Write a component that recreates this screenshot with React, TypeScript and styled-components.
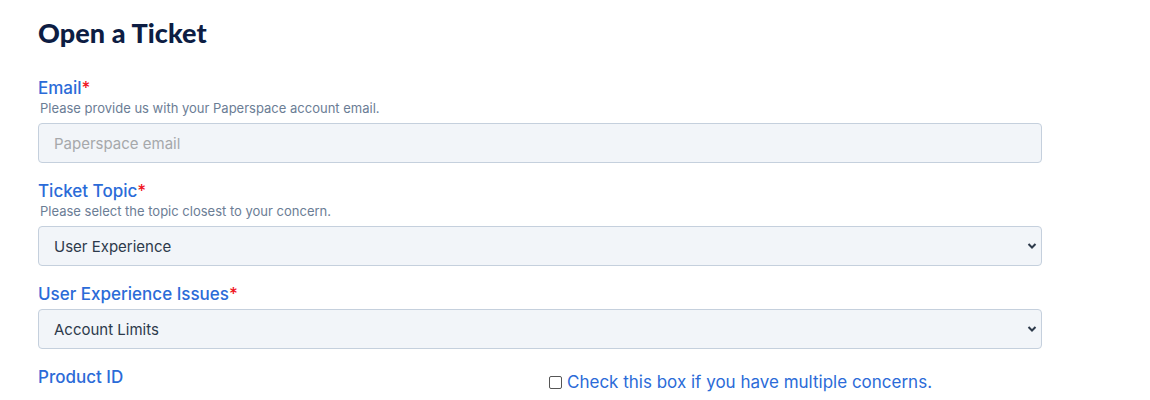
import React from "react";
import styled, { createGlobalStyle } from "styled-components";

const Global = createGlobalStyle`
  html, body { margin: 0; padding: 0; background: #ffffff; }
  body { font-family: Inter, "Liberation Sans", sans-serif; }
  * { box-sizing: border-box; }
`;

const Page = styled.div`
  padding: 16px 0 0 38px;
  width: 1042px;
`;

const Title = styled.h1`
  margin: 0 0 27px;
  font-family: Lato, Inter, sans-serif;
  font-size: 27px;
  line-height: 34px;
  font-weight: 900;
  color: #0d1d43;
  letter-spacing: 0.1px;
`;

const Field = styled.div`
  display: flex;
  flex-direction: column;
  margin-bottom: 17px;
`;

const Label = styled.label`
  font-size: 17px;
  line-height: 22px;
  font-weight: 500;
  color: #2b6bd8;
`;

const Req = styled.span`
  color: #f0141e;
`;

const Help = styled.div`
  margin: 1px 0 6px 2px;
  font-size: 13px;
  line-height: 17px;
  color: #6b7d95;
`;

const Input = styled.input`
  height: 40px;
  width: 100%;
  padding: 0 15px;
  border: 1px solid #c5d0dd;
  border-radius: 4px;
  background: #f2f5f9;
  font-family: Inter, "Liberation Sans", sans-serif;
  font-size: 15px;
  color: #2d3a4b;
  outline: none;
  &::placeholder { color: #a6a8ab; }
`;

const SelectWrap = styled.div<{ $top?: number }>`
  position: relative;
  margin-top: ${(p) => p.$top ?? 0}px;
`;

const Select = styled.select`
  appearance: none;
  height: 40px;
  width: 100%;
  padding: 0 30px 0 15px;
  border: 1px solid #c5d0dd;
  border-radius: 4px;
  background: #f2f5f9;
  font-family: Inter, "Liberation Sans", sans-serif;
  font-size: 15px;
  color: #2d3a4b;
  outline: none;
`;

const Chevron = styled.svg`
  position: absolute;
  right: 5px;
  top: 16px;
  pointer-events: none;
`;

const Row = styled.div`
  display: grid;
  grid-template-columns: 511px 1fr;
  align-items: start;
`;

const CheckLabel = styled.label`
  display: flex;
  align-items: center;
  gap: 5px;
  margin-top: 5px;
  font-size: 17px;
  line-height: 22px;
  color: #2b6bd8;
`;

const Box = styled.span`
  width: 13px;
  height: 13px;
  border: 1px solid #555;
  border-radius: 2px;
  background: #fff;
  flex: none;
`;

const Arrow = () => (
  <Chevron width="10" height="8" viewBox="0 0 10 8">
    <path d="M1.5 2 L5 5.5 L8.5 2" fill="none" stroke="#2d3a4b" strokeWidth="2" />
  </Chevron>
);

export default function App() {
  return (
    <>
      <Global />
      <Page>
        <Title>Open a Ticket</Title>
        <Field>
          <Label>
            Email<Req>*</Req>
          </Label>
          <Help>Please provide us with your Paperspace account email.</Help>
          <Input placeholder="Paperspace email" />
        </Field>
        <Field>
          <Label>
            Ticket Topic<Req>*</Req>
          </Label>
          <Help>Please select the topic closest to your concern.</Help>
          <SelectWrap>
            <Select defaultValue="ux">
              <option value="ux">User Experience</option>
            </Select>
            <Arrow />
          </SelectWrap>
        </Field>
        <Field>
          <Label>
            User Experience Issues<Req>*</Req>
          </Label>
          <SelectWrap $top={4}>
            <Select defaultValue="limits">
              <option value="limits">Account Limits</option>
            </Select>
            <Arrow />
          </SelectWrap>
        </Field>
        <Row>
          <Label>Product ID</Label>
          <CheckLabel>
            <Box />
            Check this box if you have multiple concerns.
          </CheckLabel>
        </Row>
      </Page>
    </>
  );
}
